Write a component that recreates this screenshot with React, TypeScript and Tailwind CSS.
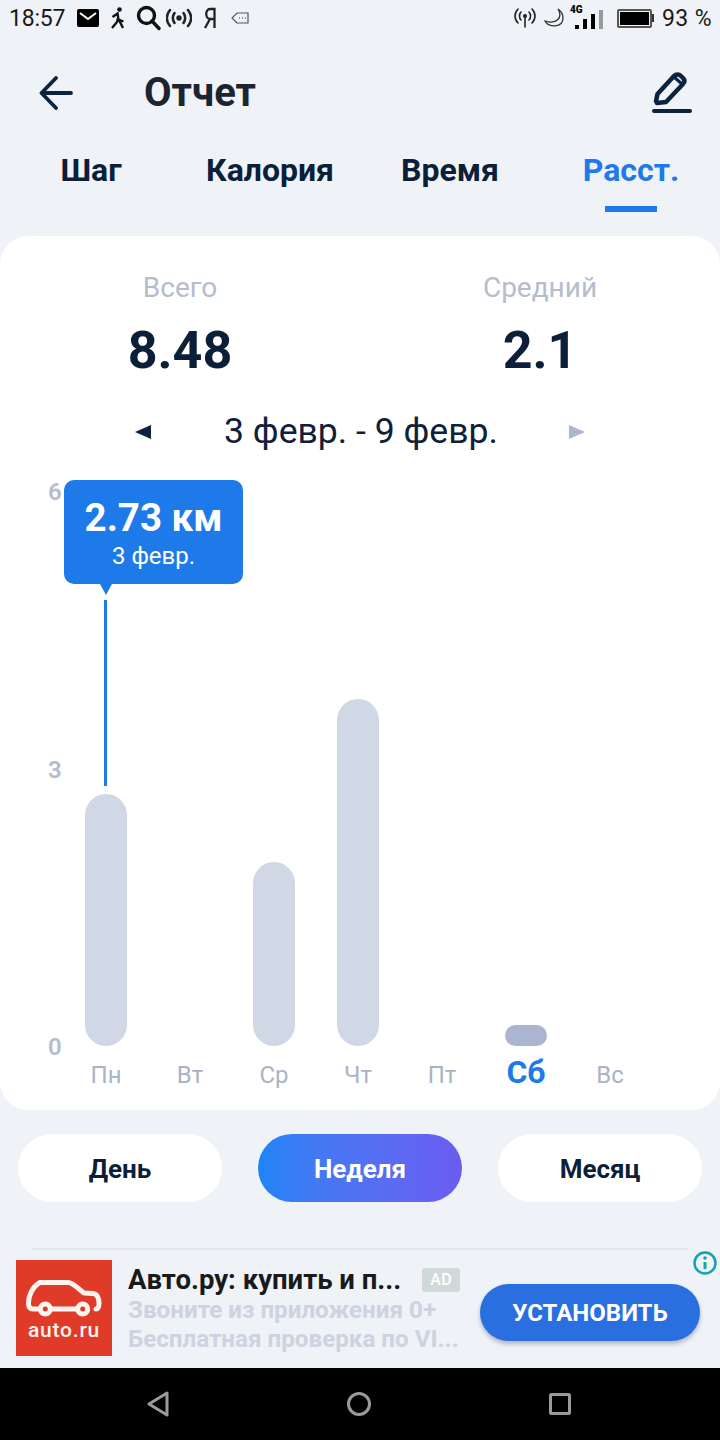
import React from "react";

const font = "font-['Roboto','Inter',sans-serif]";

function StatusBar() {
  return (
    <div className="h-[36px] flex items-center justify-between pl-[9px] pr-[8px] text-[#1a1a1a] font-['Roboto',sans-serif]">
      <div className="flex items-center">
        <span className="text-[23px] leading-none tracking-[-0.2px]">18:57</span>
        <svg className="ml-[12px]" width="22" height="18" viewBox="0 0 22 18"><rect width="22" height="18" rx="2" fill="#000" /><path d="M3 4l8 6 8-6" stroke="#fff" strokeWidth="2" fill="none" /></svg>
        <svg className="ml-[11px]" width="16" height="22" viewBox="0 0 16 22" fill="none" stroke="#111" strokeWidth="2.400"><circle cx="9.5" cy="2.5" r="2.300" fill="#111" stroke="none" /><path d="M2.500 10l5-3.500 1 6 5 2M8 11l-1 4-5 6M9 13l4 8" /></svg>
        <svg className="ml-[10px]" width="25" height="26" viewBox="0 0 25 26" fill="none" stroke="#111" strokeWidth="3.400"><circle cx="10.5" cy="10.5" r="8" /><path d="M16 16l7 7.500" strokeLinecap="round" /></svg>
        <svg className="ml-[5px]" width="26" height="20" viewBox="0 0 26 20" fill="none" stroke="#222" strokeWidth="2.500" strokeLinecap="round"><circle cx="13" cy="10" r="2.700" fill="#222" stroke="none" /><path d="M8.500 5c-2 3-2 7 0 10M17.500 5c2 3 2 7 0 10M4 2c-4 5-4 11 0 16M22 2c4 5 4 11 0 16" /></svg>
        <svg className="ml-[11px]" width="13" height="22" viewBox="0 0 13 22" fill="none" stroke="#222" strokeWidth="2.300"><path d="M11.500 21V2H7C2 2 2 12 7 12h4.500M7 12L2 21" /></svg>
        <svg className="ml-[15px]" width="18" height="12" viewBox="0 0 18 12" fill="none" stroke="#555" strokeWidth="1.200"><path d="M17 1H6L1 6l5 5h11z" /><path d="M8 6h.8M11 6h.8M14 6h.8" strokeWidth="1.500" /></svg>
      </div>
      <div className="flex items-center">
        <svg width="22" height="20" viewBox="0 0 22 20" fill="none" stroke="#222" strokeWidth="1.600" strokeLinecap="round"><circle cx="11" cy="8" r="2" fill="#222" stroke="none" /><path d="M11 9v10M7 4c-2 2-2 6 0 8M15 4c2 2 2 6 0 8M4 1c-4 4-4 10 0 14M18 1c4 4 4 10 0 14" /></svg>
        <svg className="ml-[8px]" width="20" height="20" viewBox="0 0 20 20" fill="none" stroke="#333" strokeWidth="1.300"><path d="M14 1c5 8-1 16-13 12 3 7 18 7 18-3 0-4-2-7-5-9z" /></svg>
        <div className="ml-[6px] relative w-[34px] h-[22px]">
          <span className="absolute left-0 -top-[2px] text-[10px] font-black leading-none text-black">4G</span>
          <div className="absolute left-[5px] right-0 bottom-0 flex items-end gap-[4px]">
            <div className="w-[4px] h-[4px] bg-black" />
            <div className="w-[4px] h-[10px] bg-black" />
            <div className="w-[4px] h-[15px] bg-black" />
            <div className="w-[4px] h-[19px] bg-[#999]" />
          </div>
        </div>
        <div className="ml-[13px] flex items-center">
          <div className="w-[35px] h-[19px] border-[2px] border-[#555] rounded-[2px] p-[1px]"><div className="w-full h-full bg-black" /></div>
          <div className="w-[2px] h-[8px] bg-[#333]" />
        </div>
        <span className="ml-[8px] text-[23px] leading-none tracking-[0.4px]">93 %</span>
      </div>
    </div>
  );
}

const bars: { d: string; h: number; active?: boolean }[] = [
  { d: "Пн", h: 252 },
  { d: "Вт", h: 0 },
  { d: "Ср", h: 184 },
  { d: "Чт", h: 347 },
  { d: "Пт", h: 0 },
  { d: "Сб", h: 21, active: true },
  { d: "Вс", h: 0 },
];

function Chart() {
  return (
    <div className="relative mt-[24px] h-[626px]">
      <div className="absolute left-[48px] top-[1px] h-[581px] w-[16px] flex flex-col justify-between text-[24px] leading-[26px] font-semibold text-[#b4bccd]">
        <span>6</span>
        <span>3</span>
        <span>0</span>
      </div>
      <div className="absolute left-[64px] top-0 w-[588px] h-[626px] grid grid-cols-7">
        {bars.map((b) => (
          <div key={b.d} className="flex flex-col items-center justify-end">
            {b.h > 0 && (
              <div className={`w-[42px] rounded-full ${b.active ? "bg-[#abb5d1]" : "bg-[#d0d8e6]"}`} style={{ height: b.h }} />
            )}
            <div className={`h-[58px] flex items-center ${b.active ? "text-[32px] font-bold text-[#1e7ae8] pb-[6px]" : "text-[24px] text-[#aab3c6]"}`}>
              {b.d}
            </div>
          </div>
        ))}
      </div>
      <div className="absolute left-[64px] top-[2px] w-[179px] h-[104px] bg-[#1e7ae8] rounded-[10px] text-white flex flex-col items-center pt-[15px]">
        <span className="text-[38.500px] leading-[45px] font-bold whitespace-nowrap">2.73 км</span>
        <span className="text-[24px] leading-[26px] mt-[3px]">3 февр.</span>
      </div>
      <svg className="absolute left-[100px] top-[106px]" width="12" height="11" viewBox="0 0 12 11"><path d="M0 0h12L6 11z" fill="#1e7ae8" /></svg>
      <div className="absolute left-[104px] top-[122px] w-[3px] h-[186px] bg-[#1e7ae8]" />
    </div>
  );
}

function Pill({ label, active }: { label: string; active?: boolean }) {
  return (
    <div className={`w-[204px] h-[68px] rounded-full flex items-center justify-center pt-[2px] text-[26px] font-bold ${active ? "bg-gradient-to-r from-[#1e84f5] to-[#6a5cf0] text-white" : "bg-white text-[#0b1f38]"}`}>
      {label}
    </div>
  );
}

export default function App() {
  return (
    <div className={`w-[720px] h-[1440px] bg-[#eff2f6] flex flex-col overflow-hidden ${font}`}>
      <StatusBar />
      <div className="h-[60px] mt-[27px] flex items-center pl-[39px] pr-[28px]">
        <svg width="34" height="34" viewBox="0 0 34 34" fill="none" stroke="#0c2340" strokeWidth="3.800" strokeLinecap="round" strokeLinejoin="round"><path d="M32 17H3M17 2L2.500 17 17 32" /></svg>
        <span className="ml-[71px] text-[40px] leading-none font-bold text-[#1c2430]">Отчет</span>
        <svg className="ml-auto" width="40" height="42" viewBox="0 0 40 42" fill="none" stroke="#0c2340" strokeLinecap="round" strokeLinejoin="round"><path d="M4 29l1.500-7L22 4c2-2 5-2 7 0l2 2c2 2 2 4 0 6L14 30l-9 1z" strokeWidth="4.500" /><path d="M22 5l8 7" strokeWidth="3" /><path d="M2 39h36" strokeWidth="4" /></svg>
      </div>
      <div className="h-[66px] mt-[23px] grid grid-cols-[182px_176px_184px_178px] text-[32px] font-bold text-[#0b1f38]">
        <div className="flex justify-center">Шаг</div>
        <div className="flex justify-center">Калория</div>
        <div className="flex justify-center">Время</div>
        <div className="flex flex-col items-center text-[#1e7ae8]">
          <span>Расст.</span>
          <div className="w-[52px] h-[6px] bg-[#1e7ae8] mt-auto" />
        </div>
      </div>
      <div className="mt-[24px] h-[874px] bg-white rounded-[28px] flex flex-col">
        <div className="grid grid-cols-2 pt-[35px]">
          <div className="flex flex-col items-center">
            <span className="text-[28px] leading-[34px] text-[#b4bccd]">Всего</span>
            <span className="text-[52px] leading-[60px] font-bold text-[#0b1f38] mt-[16px]">8.48</span>
          </div>
          <div className="flex flex-col items-center">
            <span className="text-[28px] leading-[34px] text-[#b4bccd]">Средний</span>
            <span className="text-[52px] leading-[60px] font-bold text-[#0b1f38] mt-[16px]">2.1</span>
          </div>
        </div>
        <div className="mt-[29px] h-[44px] flex items-center pl-[135px] text-[35.600px] text-[#0f2038]">
          <svg width="16" height="16" viewBox="0 0 16 16"><path d="M16 1v14L0 8z" fill="#0c2340" /></svg>
          <span className="ml-[73px]">3 февр. - 9 февр.</span>
          <svg className="ml-[71px]" width="16" height="16" viewBox="0 0 16 16"><path d="M0 1v14l16-7z" fill="#abb5d1" /></svg>
        </div>
        <Chart />
      </div>
      <div className="mt-[24px] px-[18px] flex justify-between">
        <Pill label="День" />
        <Pill label="Неделя" active />
        <Pill label="Месяц" />
      </div>
      <div className="mt-[46px] mx-[32px] h-[2px] bg-[#e2e5ea]" />
      <div className="relative h-[118px] flex items-start pl-[16px] pt-[10px] font-['Roboto',sans-serif]">
        <div className="w-[96px] h-[96px] bg-[#e03a28] flex flex-col items-center pt-[19px]">
          <svg width="76" height="40" viewBox="0 0 76 40" fill="none" stroke="#fff5ee" strokeWidth="5" strokeLinejoin="round" strokeLinecap="round">
            <path d="M12 30H7C3.500 30 2.500 27 2.500 24 2.500 17 6 8 14 3.500H42C47 3.500 51 9 58 14L67 14.500C71 15 73 19 73 24 73 28 72 30 70 30" />
            <path d="M26 30H50" />
            <circle cx="19.300" cy="30" r="5" fill="#e03a28" />
            <circle cx="56.700" cy="30" r="5" fill="#e03a28" />
          </svg>
          <span className="text-[21px] leading-[22px] text-[#fff5ee] font-medium tracking-[0.8px]">auto.ru</span>
        </div>
        <div className="ml-[16px] w-[336px]">
          <div className="flex items-center h-[36px] mt-[2px]">
            <span className="text-[27.500px] font-bold text-[#1a1a1a] leading-none whitespace-nowrap">Авто.ру: купить и п...</span>
            <span className="ml-[21px] w-[38px] h-[24px] rounded-[3px] bg-[#cfdad8] text-white text-[16px] font-medium flex items-center justify-center tracking-[0.5px]">AD</span>
          </div>
          <div className="text-[24.200px] leading-[29px] font-bold text-[#cdd3e0] whitespace-nowrap -mt-[2px]">Звоните из приложения 0+</div>
          <div className="text-[24.200px] leading-[29px] font-bold text-[#cdd3e0] whitespace-nowrap">Бесплатная проверка по VI...</div>
        </div>
        <div className="absolute left-[480px] top-[34px] w-[220px] h-[57px] rounded-full bg-[#2a6fdf] shadow-[0_3px_4px_rgba(60,70,100,0.35)] text-white text-[24px] font-bold flex items-center justify-center pt-[1px]">УСТАНОВИТЬ</div>
        <svg className="absolute left-[693px] top-[1px]" width="24" height="24" viewBox="0 0 24 24" fill="none"><circle cx="12" cy="12" r="10.500" stroke="#12a5ad" strokeWidth="2.500" /><path d="M12 11v7" stroke="#12a5ad" strokeWidth="3" /><circle cx="12" cy="7" r="1.800" fill="#12a5ad" /></svg>
      </div>
      <div className="h-[72px] bg-black flex items-center justify-between pl-[147px] pr-[149px]">
        <svg width="22" height="26" viewBox="0 0 22 26" fill="none" stroke="#9a9a9a" strokeWidth="3" strokeLinejoin="round"><path d="M20 2v22L2 13z" /></svg>
        <svg width="26" height="26" viewBox="0 0 26 26" fill="none" stroke="#9a9a9a" strokeWidth="3"><circle cx="13" cy="13" r="10.500" /></svg>
        <svg width="22" height="22" viewBox="0 0 22 22" fill="none" stroke="#9a9a9a" strokeWidth="3"><rect x="1.500" y="1.500" width="19" height="19" rx="1" /></svg>
      </div>
    </div>
  );
}
